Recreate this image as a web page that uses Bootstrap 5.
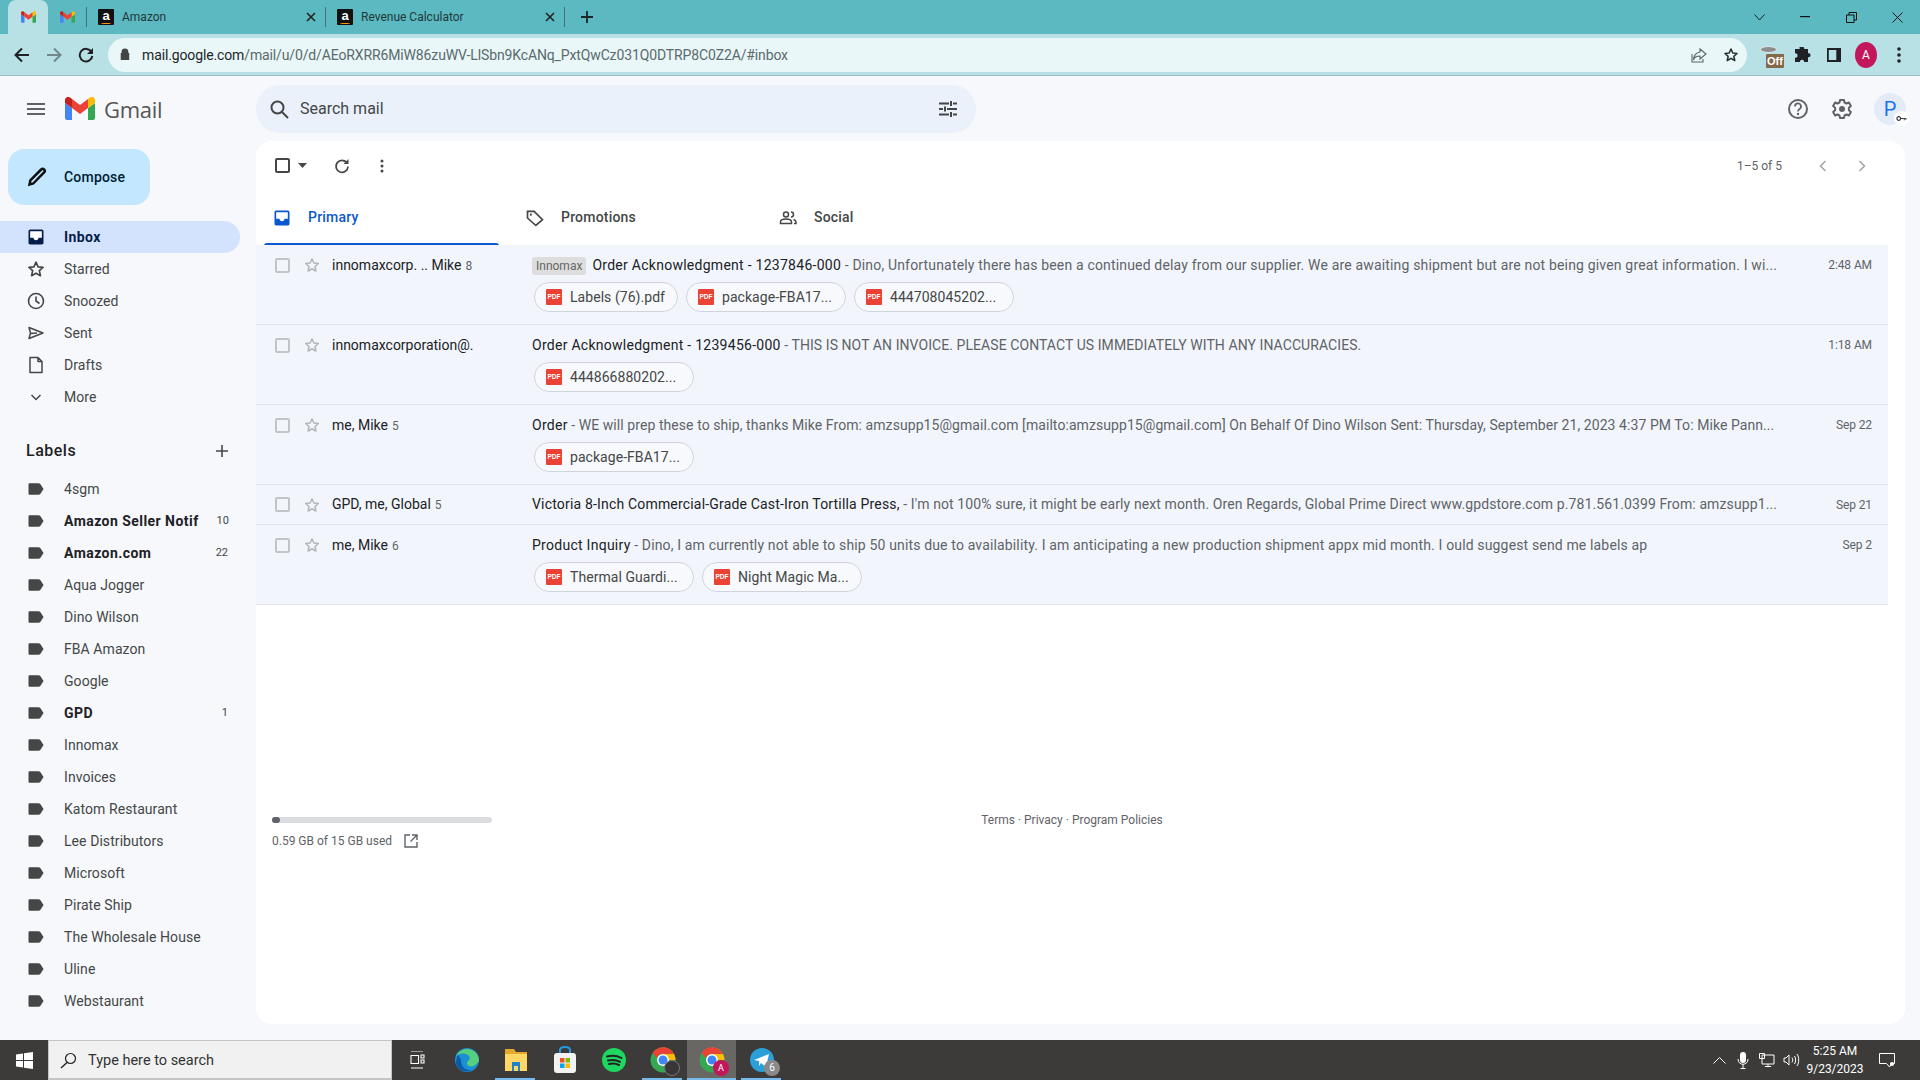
<!DOCTYPE html>
<html lang="en">
<head>
<meta charset="utf-8">
<title>Gmail</title>
<link href="https://cdn.jsdelivr.net/npm/bootstrap@5.3.0/dist/css/bootstrap.min.css" rel="stylesheet">
<style>
html,body{height:100%;}
body{width:1920px;height:1080px;overflow:hidden;font-family:Roboto,"Liberation Sans",sans-serif;font-size:14px;color:#202124;background:#f6f8fc;}
svg{display:block;flex:none;}
.shell{height:1080px;}
.tabstrip{height:34px;background:#5cb8c1;padding-left:8px;}
.tab-active{width:40px;height:34px;background:#b8e1e5;border-radius:8px 8px 0 0;}
.tab-pin{width:38px;height:34px;}
.tab-page{width:238px;height:34px;padding:0 8px 0 11px;font-size:12px;color:#20383b;}
.tab-page .tab-title{margin-left:8px;flex:1;}
.tab-sep{width:1px;height:20px;background:#3f7177;}
.plus-tab{margin-left:15px;}
.favicon-a{width:16px;height:16px;background:#111;color:#fff;font:700 13px/13px "Liberation Sans",sans-serif;text-align:center;border-radius:1px;position:relative;}
.favicon-a i{position:absolute;left:3px;right:3px;bottom:1px;height:2px;border-bottom:1.5px solid #f90;border-radius:50%;}
.winbtns{margin-left:auto;width:184px;}
.winbtn{width:46px;height:28px;align-self:flex-start;}
.toolbar{height:42px;background:#b8e1e5;border-bottom:1px solid #9dbec1;padding-top:1px;}
.navicons{width:108px;padding-left:8px;gap:5px;}
.ticon{width:27px;height:27px;}
.omnibox{width:1639px;height:34px;background:#e9f7f8;border-radius:17px;padding:0 8px 0 10px;}
.url{font-size:14px;color:#5b6a6c;margin-left:10px;flex:1;letter-spacing:-.13px;}
.url b{font-weight:400;color:#1d2526;}
.exts{margin-left:11px;gap:4px;}
.ext-off{width:28px;height:28px;position:relative;}
.ext-off span{position:absolute;left:8px;top:13px;width:18px;height:14px;background:#85684a;color:#fff;font:700 11px/14px "Liberation Sans",sans-serif;text-align:center;border-radius:1px;}
.ext-off i{position:absolute;left:2px;top:5px;width:17px;height:7px;border-radius:50%;background:#8d8f8f;border:1px solid #d8e6e7;}
.panelic{margin-left:3px;}
.chrome-av{width:22px;height:26px;margin-left:6px;background:#c2185b;border-radius:50%;color:#fff;font-size:12px;line-height:26px;text-align:center;}
.appbody{flex:1;min-height:0;}
.leftcol{width:256px;flex:none;}
.brand{height:65px;}
.burger{width:72px;padding-left:24px;}
.gm-logo{margin-left:-7px;}
.gm-word{font-family:"Open Sans",Roboto,sans-serif;font-size:22px;color:#555;margin-left:9px;letter-spacing:-.3px;padding-top:1px;}
.compose-btn{width:142px;height:56px;margin:8px 0 16px 8px;background:#c2e7ff;border-radius:16px;color:#001d35;font-weight:500;font-size:14px;letter-spacing:.2px;padding:0 0 0 19px;gap:17px;border:0;}
.snav{list-style:none;margin:0;padding:0;letter-spacing:.07px;}
.snav li{height:32px;padding-left:26px;gap:18px;width:240px;border-radius:0 16px 16px 0;color:#444746;white-space:nowrap;}
.snav li svg{width:20px;height:20px;}
.snav li.is-on{background:#d3e3fd;color:#041e49;font-weight:700;letter-spacing:.4px;}
.snav li .cnt{margin-left:auto;font-size:11px;padding-right:12px;font-weight:400;color:#444746;letter-spacing:0;}
.snav li.fw{font-weight:700;color:#202124;letter-spacing:.45px;}
.snav li.fw svg{color:#444746;}
.lab-head{height:32px;margin:22px 0 6px;padding:0 11px 0 26px;font-size:16px;font-weight:500;color:#1f1f1f;width:240px;letter-spacing:.5px;}
.rightcol{flex:1;min-width:0;padding-right:15px;padding-bottom:16px;}
.headrow{height:65px;}
.searchbox{width:720px;height:48px;margin-top:9px;background:#eaf1fb;border-radius:24px;padding:0 16px 0 11px;align-self:flex-start;color:#444746;font-size:16px;}
.searchbox span{margin-left:9px;flex:1;padding-bottom:1px;}
.headicons{margin-left:auto;}
.hicon{width:44px;height:44px;}
.pavatar{width:32px;height:32px;margin:0 -1px 0 10px;background:#e3ebf8;border-radius:50%;color:#1a73e8;font-size:20px;line-height:32px;text-align:center;position:relative;}
.pavatar i{position:absolute;right:-3px;bottom:-1px;width:15px;height:15px;border-radius:50%;background:#fff;}
.pavatar svg{position:absolute;right:-1px;bottom:1px;}
.mailcard{flex:1;min-height:0;background:#fff;border-radius:16px;padding-right:17px;position:relative;}
.actions{height:49px;padding-left:16px;}
.act{width:40px;height:24px;}
.act-first{margin-left:15px;}
.pager{margin-left:auto;font-size:12px;color:#5f6368;padding-right:7px;}
.pager span{margin-right:21px;}
.pg{width:39px;height:24px;}
.tabsrow{height:55px;padding-left:8px;}
.mtab{width:253px;height:55px;padding-left:8px;font-weight:500;letter-spacing:.2px;color:#444746;gap:16px;position:relative;}
.mtab.is-on{color:#0b57d0;}
.mtab.is-on svg{color:#0b57d0;}
.mtab.is-on::after{content:"";position:absolute;left:0;bottom:-1px;width:235px;height:3px;background:#0b57d0;border-radius:3px 3px 0 0;}
.mrow{background:#f2f6fc;border-bottom:1px solid #e0e4ea;height:80px;padding:0 16px 0 0;position:relative;}
.mrow.short{height:40px;}
.mline{height:40px;}
.mrow.short .mline{height:39px;}
.ck{width:15px;height:15px;border:2px solid #c2c4c7;border-radius:2px;margin-left:19px;flex:none;}
.ck.ck-master{margin-left:3px;border-color:#444746;}
.st{margin-left:13px;flex:none;color:#b4b7ba;}
.who{width:200px;margin-left:11px;flex:none;color:#202124;}
.who em{font-style:normal;font-size:12px;color:#5f6368;margin-left:4px;}
.msg{flex:1;min-width:0;white-space:nowrap;overflow:hidden;color:#5f6368;letter-spacing:.17px;}
.msg b{font-weight:400;color:#202124;letter-spacing:.27px;}
.msg.sp2{letter-spacing:.07px;}
.msg.sp3{letter-spacing:.11px;}
.msg.sp3 b{letter-spacing:.18px;}
.msg.sp4{letter-spacing:.15px;}
.tagchip{display:inline-block;background:#dddddd;color:#666;font-size:12px;line-height:18px;padding:0 4px;border-radius:3px;margin-right:6px;letter-spacing:0;}
.when{width:72px;text-align:right;font-size:12px;color:#5f6368;flex:none;letter-spacing:-.1px;}
.chips{padding-left:278px;gap:8px;margin-top:-3px;}
.chipx{height:30px;width:160px;border:1px solid #cfd4dc;border-radius:15px;color:#444746;padding:0 0 0 11px;gap:8px;background:#f7f9fd;white-space:nowrap;letter-spacing:.05px;}
.chipx.narrow{width:144px;}
.pdf{width:16px;height:16px;background:#ea4335;border-radius:1px;color:#fff;font:700 6.5px/16px "Liberation Sans",sans-serif;text-align:center;flex:none;}
.foot{padding:212px 0 0 16px;position:relative;}
.store{width:220px;}
.meter{height:6px;background:#dadce0;border-radius:3px;width:220px;}
.meter div{height:6px;width:8px;background:#5f6368;border-radius:3px;}
.usedline{font-size:12px;color:#5f6368;gap:11px;margin-top:9px;}
.legal{position:absolute;left:0;right:0;top:206px;text-align:center;font-size:12px;color:#5f6368;}
.winbar{height:40px;background:#3c3b39;color:#fff;flex:none;}
.startb{width:48px;height:40px;}
.wsearch{width:344px;height:40px;background:#f1f1f1;border:1px solid #c4c4c4;border-bottom-width:2px;color:#333;font-size:14.5px;padding:2px 0 0 11px;gap:11px;}
.tskslot{height:40px;width:49px;position:relative;}
.tskslot.first{width:50px;}
.tskslot.last{margin-left:1px;}
.tskslot.lit::after{content:"";position:absolute;left:4px;right:5px;bottom:0;height:2px;background:#76b9ed;}
.tskslot.act2{background:#686764;}
.tskslot.act2::after{content:"";position:absolute;left:0;right:0;bottom:0;height:2px;background:#76b9ed;}
.tsk-badge{position:absolute;right:7px;bottom:4px;width:16px;height:16px;border-radius:50%;background:#c2185b;color:#fff;font-size:9px;line-height:16px;text-align:center;}
.tsk-badge.gr{background:#8a8a8a;font-size:10px;right:6px;}
.tsk-badge.ph{background:#3a3638;border:1px solid #777;}
.tray{margin-left:auto;padding-right:13px;}
.tray-slot{width:24px;height:40px;}
.clock{width:64px;text-align:center;font-size:12px;line-height:18px;color:#fff;}
.notif-slot{width:40px;height:40px;}
</style>
</head>
<body>
<svg width="0" height="0" class="position-absolute">
<defs>
<symbol id="m" viewBox="0 0 30 23"><path fill="#4285f4" d="M2 23h5V11L0 6v15a2 2 0 0 0 2 2z"/><path fill="#34a853" d="M23 23h5a2 2 0 0 0 2-2V6l-7 5z"/><path fill="#fbbc04" d="M23 2v9l7-5V3c0-2.600-3-4-5-2.500z"/><path fill="#ea4335" d="M7 11V2l8 6 8-6v9l-8 6z"/><path fill="#c5221f" d="M0 3v3l7 5V2L5 .5C3-1 0 .4 0 3z"/></symbol>
<symbol id="inb" viewBox="0 0 24 24"><rect x="4" y="4" width="16" height="12" fill="#fff"/><path fill="currentColor" d="M19 3H5c-1.100 0-2 .9-2 2v14c0 1.100.9 2 2 2h14c1.100 0 2-.9 2-2V5c0-1.100-.9-2-2-2zm0 10h-4c0 1.660-1.340 3-3 3s-3-1.340-3-3H5V5h14v8z"/></symbol>
<symbol id="star" viewBox="0 0 24 24"><path fill="none" stroke="currentColor" stroke-width="2" stroke-linejoin="round" d="M12 3.800l2.500 5.600 6 .6-4.500 4 1.300 6L12 17l-5.300 3 1.300-6-4.500-4 6-.6z"/></symbol>
<symbol id="tagl" viewBox="0 0 24 24"><path fill="currentColor" d="M4 5h11c1 0 1.700.4 2.200 1L21 12l-3.800 6c-.5.6-1.200 1-2.200 1H4c-.6 0-1-.4-1-1V6c0-.6.4-1 1-1z"/></symbol>
<symbol id="pdfk" viewBox="0 0 24 24"><path fill="none" stroke="currentColor" stroke-width="2" d="M3 12V4h8l10 10-8 7z"/><circle cx="7" cy="8" r="1.300" fill="currentColor"/></symbol>
</defs>
</svg>
<div class="shell d-flex flex-column">
  <div class="tabstrip d-flex align-items-center">
    <div class="tab-active d-flex align-items-center justify-content-center"><svg width="15" height="12"><use href="#m"/></svg></div>
    <div class="tab-pin d-flex align-items-center justify-content-center"><svg width="15" height="12"><use href="#m"/></svg></div>
    <div class="tab-sep"></div>
    <div class="tab-page d-flex align-items-center"><div class="favicon-a">a<i></i></div><span class="tab-title">Amazon</span><svg width="12" height="12" viewBox="0 0 12 12"><path d="M2 2l8 8M10 2l-8 8" stroke="#222" stroke-width="1.600"/></svg></div>
    <div class="tab-sep"></div>
    <div class="tab-page d-flex align-items-center"><div class="favicon-a">a<i></i></div><span class="tab-title">Revenue Calculator</span><svg width="12" height="12" viewBox="0 0 12 12"><path d="M2 2l8 8M10 2l-8 8" stroke="#222" stroke-width="1.600"/></svg></div>
    <div class="tab-sep"></div>
    <svg class="plus-tab" width="14" height="14" viewBox="0 0 14 14"><path d="M7 1v12M1 7h12" stroke="#1d2526" stroke-width="1.800"/></svg>
    <div class="winbtns d-flex">
      <div class="winbtn d-flex align-items-center justify-content-center"><svg width="11" height="7" viewBox="0 0 11 7"><path d="M.5.5l5 5.500 5-5.500" fill="none" stroke="#1d2526"/></svg></div>
      <div class="winbtn d-flex align-items-center justify-content-center"><svg width="11" height="2"><rect width="10" height="1.200" fill="#111"/></svg></div>
      <div class="winbtn d-flex align-items-center justify-content-center"><svg width="11" height="11" viewBox="0 0 11 11"><path d="M.5 3h7.500v7.500H.5zM3 3V.5h7.500V8H8" fill="none" stroke="#111"/></svg></div>
      <div class="winbtn d-flex align-items-center justify-content-center"><svg width="11" height="11" viewBox="0 0 11 11"><path d="M.5.500l10 10M10.500.500l-10 10" stroke="#111"/></svg></div>
    </div>
  </div>
  <div class="toolbar d-flex align-items-center">
    <div class="navicons d-flex align-items-center">
      <div class="ticon d-flex align-items-center justify-content-center"><svg width="16" height="16" viewBox="0 0 16 16"><path d="M15 8H2M8 1.500L1.500 8 8 14.500" fill="none" stroke="#202124" stroke-width="2"/></svg></div>
      <div class="ticon d-flex align-items-center justify-content-center"><svg width="16" height="16" viewBox="0 0 16 16"><path d="M1 8h13M8 1.500L14.500 8 8 14.500" fill="none" stroke="#70888b" stroke-width="2"/></svg></div>
      <div class="ticon d-flex align-items-center justify-content-center"><svg width="16" height="16" viewBox="0 0 16 16"><path d="M13.500 5A6.300 6.300 0 1 0 14.300 9" fill="none" stroke="#202124" stroke-width="2"/><path d="M15 1v6H9z" fill="#202124"/></svg></div>
    </div>
    <div class="omnibox d-flex align-items-center">
      <svg width="14" height="14" viewBox="0 0 14 14"><path d="M3 6V4.500a4 4 0 0 1 8 0V6h1v8H2V6z" fill="#444" transform="translate(1 0) scale(.85)"/></svg>
      <div class="url"><b>mail.google.com</b>/mail/u/0/d/AEoRXRR6MiW86zuWV-LlSbn9KcANq_PxtQwCz031Q0DTRP8C0Z2A/#inbox</div>
      <svg class="me-3" width="16" height="16" viewBox="0 0 16 16"><path d="M9 2l6 5-6 5V9C5 9 3 11 2.500 13 2.500 9 5 5.500 9 5zM1 7v8h11v-3" fill="none" stroke="#5a6466" stroke-width="1.100"/></svg>
      <svg width="16" height="16" viewBox="0 0 24 24"><path fill="none" stroke="#2a3031" stroke-width="2.400" stroke-linejoin="round" d="M12 3l2.700 6 6.300.7-4.700 4.300 1.300 6.300L12 17l-5.600 3.300 1.300-6.300L3 9.700 9.300 9z"/></svg>
    </div>
    <div class="exts d-flex align-items-center">
      <div class="ext-off"><i></i><span>Off</span></div>
      <svg width="26" height="18" viewBox="-4 0 26 18"><path fill="#202124" d="M6 1h3c1 0 1.500 1 1.200 2H14v4.500c1-.5 2.500 0 2.500 1.700S15 11.500 14 11v5h-4c.4-1.200-.4-2.300-1.900-2.300S5.700 14.800 6 16H1v-4.500C2 12 3.500 11.500 3.500 9.700S2 7 1 7.500V3h4.800C5.500 2 5 1 6 1z"/></svg>
      <svg class="panelic" width="22" height="14" viewBox="0 0 22 14"><path fill="#202124" d="M4 0h14v14H4zM5.800 2v10h7.500V2z"/></svg>
      <div class="chrome-av">A</div>
      <svg class="ms-3" width="4" height="16" viewBox="0 0 4 16"><circle cx="2" cy="2" r="1.800" fill="#202124"/><circle cx="2" cy="8" r="1.800" fill="#202124"/><circle cx="2" cy="14" r="1.800" fill="#202124"/></svg>
    </div>
  </div>
  <div class="appbody d-flex">
    <div class="leftcol">
      <div class="brand d-flex align-items-center">
        <div class="burger"><svg width="24" height="24" viewBox="0 0 24 24"><path d="M3 6h18v2H3zM3 11h18v2H3zM3 16h18v2H3z" fill="#5f6368"/></svg></div>
        <svg class="gm-logo" width="30" height="23"><use href="#m"/></svg>
        <span class="gm-word">Gmail</span>
      </div>
      <button type="button" class="compose-btn btn d-flex align-items-center">
        <svg width="20" height="20" viewBox="0 0 24 24"><path fill="none" stroke="#111" stroke-width="3" d="M3 21l1-5L17 3c1-1 2.500-1 3.500 0s1 2.500 0 3.500L7.500 19.800z"/></svg>Compose
      </button>
      <ul class="snav">
        <li class="is-on d-flex align-items-center"><svg><use href="#inb"/></svg>Inbox</li>
        <li class="d-flex align-items-center"><svg><use href="#star"/></svg>Starred</li>
        <li class="d-flex align-items-center"><svg viewBox="0 0 20 20"><circle cx="10" cy="10" r="7.500" fill="none" stroke="#444746" stroke-width="1.600"/><path d="M10 5.500V10l3.500 2.500" fill="none" stroke="#444746" stroke-width="1.600"/></svg>Snoozed</li>
        <li class="d-flex align-items-center"><svg viewBox="0 0 20 20"><path d="M3 4.500L17 10 3 15.500l1.500-5.500zM4.500 10.500L11 10" fill="none" stroke="#444746" stroke-width="1.500" stroke-linejoin="round"/></svg>Sent</li>
        <li class="d-flex align-items-center"><svg viewBox="0 0 20 20"><path d="M4 2.500h8l4 4v11H4zM12 2.500v4h4" fill="none" stroke="#444746" stroke-width="1.500" stroke-linejoin="round"/></svg>Drafts</li>
        <li class="d-flex align-items-center"><svg viewBox="0 0 20 20"><path d="M5.500 8l4.500 4.500L14.500 8" fill="none" stroke="#444746" stroke-width="1.500"/></svg>More</li>
      </ul>
      <div class="lab-head d-flex align-items-center justify-content-between">Labels<svg width="14" height="14" viewBox="0 0 14 14"><path d="M7 1v12M1 7h12" stroke="#444746" stroke-width="1.600"/></svg></div>
      <ul class="snav">
        <li class="d-flex align-items-center"><svg><use href="#tagl"/></svg>4sgm</li>
        <li class="fw d-flex align-items-center"><svg><use href="#tagl"/></svg>Amazon Seller Notif<span class="cnt">10</span></li>
        <li class="fw d-flex align-items-center"><svg><use href="#tagl"/></svg>Amazon.com<span class="cnt">22</span></li>
        <li class="d-flex align-items-center"><svg><use href="#tagl"/></svg>Aqua Jogger</li>
        <li class="d-flex align-items-center"><svg><use href="#tagl"/></svg>Dino Wilson</li>
        <li class="d-flex align-items-center"><svg><use href="#tagl"/></svg>FBA Amazon</li>
        <li class="d-flex align-items-center"><svg><use href="#tagl"/></svg>Google</li>
        <li class="fw d-flex align-items-center"><svg><use href="#tagl"/></svg>GPD<span class="cnt">1</span></li>
        <li class="d-flex align-items-center"><svg><use href="#tagl"/></svg>Innomax</li>
        <li class="d-flex align-items-center"><svg><use href="#tagl"/></svg>Invoices</li>
        <li class="d-flex align-items-center"><svg><use href="#tagl"/></svg>Katom Restaurant</li>
        <li class="d-flex align-items-center"><svg><use href="#tagl"/></svg>Lee Distributors</li>
        <li class="d-flex align-items-center"><svg><use href="#tagl"/></svg>Microsoft</li>
        <li class="d-flex align-items-center"><svg><use href="#tagl"/></svg>Pirate Ship</li>
        <li class="d-flex align-items-center"><svg><use href="#tagl"/></svg>The Wholesale House</li>
        <li class="d-flex align-items-center"><svg><use href="#tagl"/></svg>Uline</li>
        <li class="d-flex align-items-center"><svg><use href="#tagl"/></svg>Webstaurant</li>
      </ul>
    </div>
    <div class="rightcol d-flex flex-column">
      <div class="headrow d-flex">
        <div class="searchbox d-flex align-items-center">
          <svg width="24" height="24" viewBox="0 0 24 24"><circle cx="10.500" cy="10.500" r="6" fill="none" stroke="#444746" stroke-width="2"/><path d="M15 15l6 6" stroke="#444746" stroke-width="2"/></svg>
          <span>Search mail</span>
          <svg width="24" height="24" viewBox="0 0 24 24"><path d="M3 6.500h10M17 6.500h4M3 12h4M11 12h10M3 17.500h10M17 17.500h4M15 4v5M9 9.500v5M15 15v5" fill="none" stroke="#444746" stroke-width="2"/></svg>
        </div>
        <div class="headicons d-flex align-items-center">
          <div class="hicon d-flex align-items-center justify-content-center"><svg width="24" height="24" viewBox="0 0 24 24"><circle cx="12" cy="12" r="9" fill="none" stroke="#5f6368" stroke-width="2"/><path d="M9 9.500A3 3 0 1 1 13.500 12c-1 .6-1.500 1.200-1.500 2.500" fill="none" stroke="#5f6368" stroke-width="1.800"/><circle cx="12" cy="17" r="1.200" fill="#5f6368"/></svg></div>
          <div class="hicon d-flex align-items-center justify-content-center"><svg width="24" height="24" viewBox="0 0 24 24"><path fill="none" stroke="#5f6368" stroke-width="2" stroke-linejoin="round" d="M10 3h4l.5 2.500 2 1 2.400-1 2 3.500-2 1.700v2.600l2 1.700-2 3.500-2.400-1-2 1L14 21h-4l-.5-2.500-2-1-2.400 1-2-3.500 2-1.700v-2.600L3.100 9l2-3.500 2.400 1 2-1z"/><circle cx="12" cy="12" r="3" fill="#5f6368"/></svg></div>
          <div class="pavatar">P<i></i><svg width="11" height="11" viewBox="0 0 12 12"><circle cx="3" cy="6" r="2" fill="none" stroke="#333" stroke-width="1.200"/><path d="M5 6h6M9 6v2M11 6v1.500" stroke="#333" stroke-width="1"/></svg></div>
        </div>
      </div>
      <div class="mailcard d-flex flex-column">
        <div class="actions d-flex align-items-center">
          <div class="d-flex align-items-center">
            <div class="ck ck-master"></div>
            <svg class="ms-2" width="9" height="5" viewBox="0 0 9 5"><path d="M0 0h9L4.500 5z" fill="#444746"/></svg>
            <div class="act act-first d-flex align-items-center justify-content-center"><svg width="18" height="18" viewBox="0 0 18 18"><path d="M14 6a6 6 0 1 0 1 3.500" fill="none" stroke="#444746" stroke-width="1.700"/><path d="M15.500 2v5h-5z" fill="#444746"/></svg></div>
            <div class="act d-flex align-items-center justify-content-center"><svg width="4" height="14" viewBox="0 0 4 14"><circle cx="2" cy="2" r="1.500" fill="#444746"/><circle cx="2" cy="7" r="1.500" fill="#444746"/><circle cx="2" cy="12" r="1.500" fill="#444746"/></svg></div>
          </div>
          <div class="pager d-flex align-items-center">
            <span>1–5 of 5</span>
            <div class="pg d-flex align-items-center justify-content-center"><svg width="8" height="12" viewBox="0 0 8 12"><path d="M6.500 1L1.500 6l5 5" fill="none" stroke="#a0a3a6" stroke-width="1.500"/></svg></div>
            <div class="pg d-flex align-items-center justify-content-center"><svg width="8" height="12" viewBox="0 0 8 12"><path d="M1.500 1l5 5-5 5" fill="none" stroke="#a0a3a6" stroke-width="1.500"/></svg></div>
          </div>
        </div>
        <div class="tabsrow d-flex">
          <div class="mtab is-on d-flex align-items-center"><svg width="20" height="20"><use href="#inb"/></svg>Primary</div>
          <div class="mtab d-flex align-items-center"><svg width="20" height="20"><use href="#pdfk"/></svg>Promotions</div>
          <div class="mtab d-flex align-items-center"><svg width="20" height="20" viewBox="0 0 20 20"><circle cx="8" cy="6.500" r="2.500" fill="none" stroke="#444746" stroke-width="1.500"/><path d="M2.500 15.500v-1.500c0-2 3-3 5.500-3s5.500 1 5.500 3v1.500zM13 4a2.500 2.500 0 0 1 0 5M15.500 11.500c1.500.5 2.500 1.500 2.500 2.500v1.500h-2" fill="none" stroke="#444746" stroke-width="1.500"/></svg>Social</div>
        </div>
        <div>
          <div class="mrow">
            <div class="mline d-flex align-items-center"><div class="ck"></div><svg class="st" width="18" height="18"><use href="#star"/></svg><div class="who">innomaxcorp. .. Mike<em>8</em></div><div class="msg"><span class="tagchip">Innomax</span><b>Order Acknowledgment - 1237846-000</b> - Dino, Unfortunately there has been a continued delay from our supplier. We are awaiting shipment but are not being given great information. I wi...</div><div class="when">2:48 AM</div></div>
            <div class="chips d-flex"><div class="chipx narrow d-flex align-items-center"><div class="pdf">PDF</div>Labels (76).pdf</div><div class="chipx d-flex align-items-center"><div class="pdf">PDF</div>package-FBA17...</div><div class="chipx d-flex align-items-center"><div class="pdf">PDF</div>444708045202...</div></div>
          </div>
          <div class="mrow">
            <div class="mline d-flex align-items-center"><div class="ck"></div><svg class="st" width="18" height="18"><use href="#star"/></svg><div class="who">innomaxcorporation@.</div><div class="msg sp2"><b>Order Acknowledgment - 1239456-000</b> - THIS IS NOT AN INVOICE. PLEASE CONTACT US IMMEDIATELY WITH ANY INACCURACIES.</div><div class="when">1:18 AM</div></div>
            <div class="chips d-flex"><div class="chipx d-flex align-items-center"><div class="pdf">PDF</div>444866880202...</div></div>
          </div>
          <div class="mrow">
            <div class="mline d-flex align-items-center"><div class="ck"></div><svg class="st" width="18" height="18"><use href="#star"/></svg><div class="who">me, Mike<em>5</em></div><div class="msg sp2"><b>Order</b> - WE will prep these to ship, thanks Mike From: amzsupp15@gmail.com [mailto:amzsupp15@gmail.com] On Behalf Of Dino Wilson Sent: Thursday, September 21, 2023 4:37 PM To: Mike Pann...</div><div class="when">Sep 22</div></div>
            <div class="chips d-flex"><div class="chipx d-flex align-items-center"><div class="pdf">PDF</div>package-FBA17...</div></div>
          </div>
          <div class="mrow short">
            <div class="mline d-flex align-items-center"><div class="ck"></div><svg class="st" width="18" height="18"><use href="#star"/></svg><div class="who">GPD, me, Global<em>5</em></div><div class="msg sp3"><b>Victoria 8-Inch Commercial-Grade Cast-Iron Tortilla Press,</b> - I'm not 100% sure, it might be early next month. Oren Regards, Global Prime Direct www.gpdstore.com p.781.561.0399 From: amzsupp1...</div><div class="when">Sep 21</div></div>
          </div>
          <div class="mrow">
            <div class="mline d-flex align-items-center"><div class="ck"></div><svg class="st" width="18" height="18"><use href="#star"/></svg><div class="who">me, Mike<em>6</em></div><div class="msg sp4"><b>Product Inquiry</b> - Dino, I am currently not able to ship 50 units due to availability. I am anticipating a new production shipment appx mid month. I ould suggest send me labels ap</div><div class="when">Sep 2</div></div>
            <div class="chips d-flex"><div class="chipx d-flex align-items-center"><div class="pdf">PDF</div>Thermal Guardi...</div><div class="chipx d-flex align-items-center"><div class="pdf">PDF</div>Night Magic Ma...</div></div>
          </div>
        </div>
        <div class="foot">
          <div class="legal">Terms · Privacy · Program Policies</div>
          <div class="store">
            <div class="meter"><div></div></div>
            <div class="usedline d-flex align-items-center">0.59 GB of 15 GB used<svg width="16" height="16" viewBox="0 0 16 16"><path d="M7 2H2v12h12V9M9 2h5v5M14 2L7.500 8.500" fill="none" stroke="#5f6368" stroke-width="1.400"/></svg></div>
          </div>
        </div>
      </div>
    </div>
  </div>
  <div class="winbar d-flex align-items-center">
    <div class="startb d-flex align-items-center justify-content-center"><svg width="17" height="17" viewBox="0 0 17 17"><path fill="#fff" d="M0 2.500L7 1.500V8H0zM8 1.300L17 0v8H8zM0 9h7v6.500L0 14.500zM8 9h9v8l-9-1.300z"/></svg></div>
    <div class="wsearch d-flex align-items-center"><svg width="17" height="17" viewBox="0 0 17 17"><circle cx="10.500" cy="6.500" r="5" fill="none" stroke="#222" stroke-width="1.200"/><path d="M7 10.500L1 16" stroke="#222" stroke-width="1.400"/></svg>Type here to search</div>
    <div class="tskslot first d-flex align-items-center justify-content-center"><svg width="16" height="18" viewBox="0 0 16 18"><path d="M2 0h12M2 17h12M2 4.500h7.500v8H2zM12 4h3v3h-3zM12 9h3v3h-3z" fill="none" stroke="#fff" stroke-width="1.100"/></svg></div>
    <div class="tskslot d-flex align-items-center justify-content-center"><svg width="26" height="26" viewBox="0 0 26 26"><circle cx="13" cy="13" r="12" fill="#1b8fd4"/><path d="M25 14c0-7-5-12-12-12C8 2 4 5 2 9c3-3 12-4 14 2 0 2-3 3-3 5 0 4 7 6 12-2z" fill="#56cf7e"/><path d="M7 14c0 6 5 10 11 9-5 3-15 1-16-7 0-3 1-6 2-8 1 2 3 3 3 6z" fill="#0c59a4"/></svg></div>
    <div class="tskslot lit d-flex align-items-center justify-content-center"><svg width="24" height="22" viewBox="0 0 24 22"><path d="M1 0h9l2 3h11v7H1z" fill="#e5a82e"/><path d="M1 5h22v17H1z" fill="#ffd764"/><path d="M8 13h8v9h-2v-5h-4v5H8z" fill="#1d83c9"/></svg></div>
    <div class="tskslot d-flex align-items-center justify-content-center"><svg width="24" height="28" viewBox="0 0 24 28"><path d="M7 8V4c0-4 10-4 10 0v4" fill="none" stroke="#2299e0" stroke-width="2"/><rect x="1" y="7" width="22" height="20" rx="3" fill="#f2f2f2"/><rect x="7" y="12" width="4.500" height="4.500" fill="#f25022"/><rect x="12.500" y="12" width="4.500" height="4.500" fill="#7fba00"/><rect x="7" y="17.500" width="4.500" height="4.500" fill="#00a4ef"/><rect x="12.500" y="17.500" width="4.500" height="4.500" fill="#ffb900"/></svg></div>
    <div class="tskslot d-flex align-items-center justify-content-center"><svg width="24" height="24" viewBox="0 0 24 24"><circle cx="12" cy="12" r="12" fill="#1ed760"/><path d="M5 8.500c5-1.500 10-1 14.500 1.500M6 12.500c4-1 8.500-.7 12 1.300M7 16c3.500-.8 7-.5 10 1" fill="none" stroke="#222" stroke-width="2" stroke-linecap="round"/></svg></div>
    <div class="tskslot lit d-flex align-items-center justify-content-center"><svg width="26" height="26" viewBox="0 0 26 26"><circle cx="13" cy="13" r="12.500" fill="#34a853"/><path d="M13 .5A12.500 12.500 0 0 1 25.500 13H13z" fill="#fbbc04"/><path d="M2.500 6A12.500 12.500 0 0 1 24 7H13a6 6 0 0 0-6 4z" fill="#ea4335"/><circle cx="13" cy="13" r="6" fill="#fff"/><circle cx="13" cy="13" r="4.500" fill="#4285f4"/></svg><div class="tsk-badge ph"></div></div>
    <div class="tskslot act2 d-flex align-items-center justify-content-center"><svg width="26" height="26" viewBox="0 0 26 26"><circle cx="13" cy="13" r="12.500" fill="#34a853"/><path d="M13 .5A12.500 12.500 0 0 1 25.500 13H13z" fill="#fbbc04"/><path d="M2.500 6A12.500 12.500 0 0 1 24 7H13a6 6 0 0 0-6 4z" fill="#ea4335"/><circle cx="13" cy="13" r="6" fill="#fff"/><circle cx="13" cy="13" r="4.500" fill="#4285f4"/></svg><div class="tsk-badge">A</div></div>
    <div class="tskslot last lit d-flex align-items-center justify-content-center"><svg width="24" height="24" viewBox="0 0 24 24"><circle cx="12" cy="12" r="12" fill="#2a9fd8"/><path d="M4 12l15-6-3 13-5-4-2 3v-5z" fill="#fff"/></svg><div class="tsk-badge gr">6</div></div>
    <div class="tray d-flex align-items-center">
      <div class="tray-slot d-flex align-items-center justify-content-center"><svg width="13" height="7" viewBox="0 0 13 7"><path d="M.5 6.500l6-6 6 6" fill="none" stroke="#fff"/></svg></div>
      <div class="tray-slot d-flex align-items-center justify-content-center"><svg width="12" height="17" viewBox="0 0 12 17"><rect x="3" y="0" width="6" height="11" rx="3" fill="#fff"/><path d="M1 7c0 7 10 7 10 0M6 12v4M3.500 16.500h5" fill="none" stroke="#fff"/></svg></div>
      <div class="tray-slot d-flex align-items-center justify-content-center"><svg width="16" height="14" viewBox="0 0 16 14"><path d="M3 2h12v9H3zM9 11v2.500M6 13.500h6M.5.500h5v5h-5z" fill="#3c3b39" stroke="#fff"/></svg></div>
      <div class="tray-slot d-flex align-items-center justify-content-center"><svg width="17" height="14" viewBox="0 0 17 14"><path d="M1 5v4h2l3 3V2L3 5zM9 4.500c1 1.500 1 3.500 0 5M11.500 3c1.500 2.500 1.500 5.500 0 8M14 1c2.300 3.500 2.300 8.500 0 12" fill="none" stroke="#fff"/></svg></div>
      <div class="clock">5:25 AM<br>9/23/2023</div>
      <div class="notif-slot d-flex align-items-center justify-content-center"><svg width="16" height="15" viewBox="0 0 16 15"><path d="M.5.500h15v10h-3l-2 3.500-3-3.500h-7z" fill="none" stroke="#fff"/><circle cx="13" cy="11" r="2" fill="#fff"/></svg></div>
    </div>
  </div>
</div>
</body>
</html>
